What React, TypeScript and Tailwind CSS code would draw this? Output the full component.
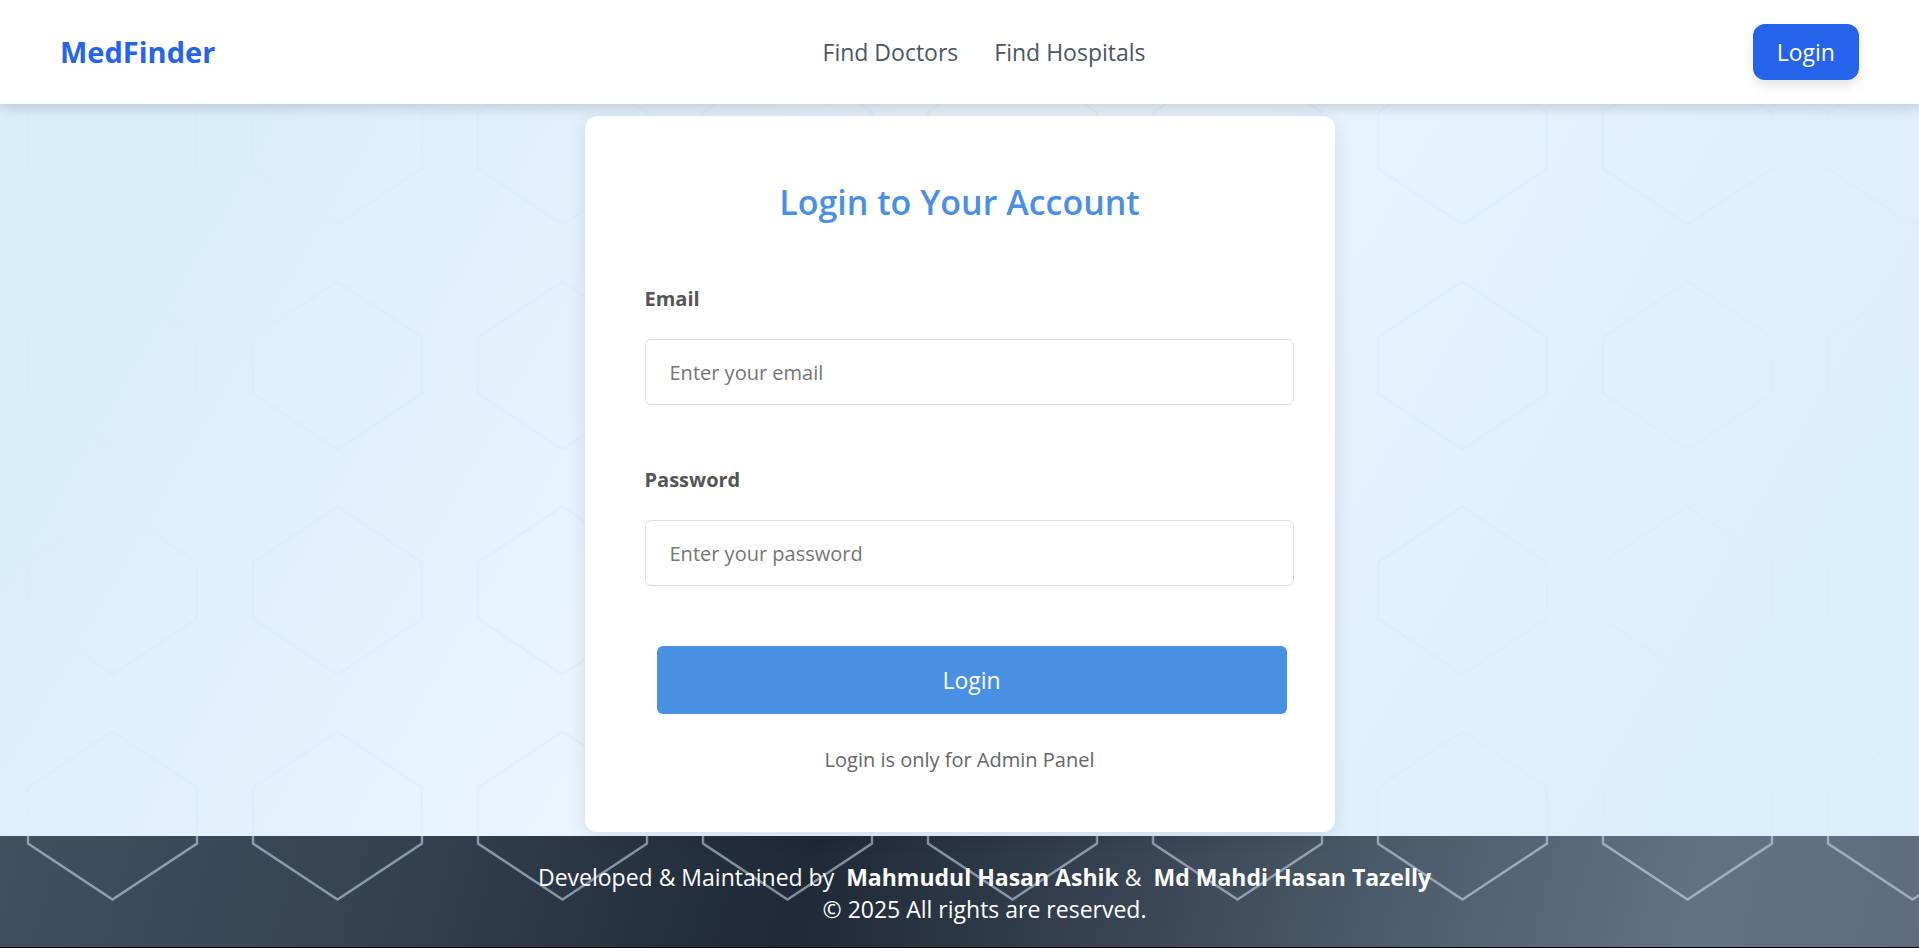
import type { ReactNode } from "react";

function HexPattern() {
  return (
    <svg className="pointer-events-none absolute inset-0 h-full w-full" aria-hidden="true">
      <defs>
        <pattern id="hex" width="225" height="225" patternUnits="userSpaceOnUse" patternTransform="translate(0 28)">
          <path
            d="M112.5 28.5 L197 84.5 V140.5 L112.5 196.5 L28 140.5 V84.5 Z"
            fill="none"
            stroke="#dbeafe"
            strokeOpacity="0.52"
            strokeWidth="2.4"
          />
        </pattern>
      </defs>
      <rect width="100%" height="100%" fill="url(#hex)" />
    </svg>
  );
}

function Header() {
  return (
    <header className="relative z-10 flex items-center justify-between bg-white px-[60px] py-6 shadow-[0_4px_12px_rgba(0,0,0,0.15)]">
      <a href="#home" className="text-[29px] leading-9 font-bold text-[#2563eb]">
        MedFinder
      </a>
      <nav className="flex gap-9 text-[23px] leading-8 text-[#4b5563]">
        <a href="#doctors">Find Doctors</a>
        <a href="#hospitals">Find Hospitals</a>
      </nav>
      <button
        type="button"
        className="rounded-xl bg-[#2563eb] px-6 py-3 text-[23px] leading-8 text-white shadow-[0_6px_12px_rgba(0,0,0,0.1)]"
      >
        Login
      </button>
    </header>
  );
}

type FieldProps = { id: string; label: ReactNode; type: string; placeholder: string };

function Field({ id, label, type, placeholder }: FieldProps) {
  return (
    <div className="flex flex-col gap-6">
      <label htmlFor={id} className="text-[20px] leading-8 font-bold text-[#555]">
        {label}
      </label>
      <input
        id={id}
        type={type}
        placeholder={placeholder}
        className="-mr-[19px] h-[66px] rounded-md border border-[#ddd] bg-white px-6 text-[20px] placeholder:text-[#757575]"
      />
    </div>
  );
}

function LoginCard() {
  return (
    <form className="relative flex w-full max-w-[750px] flex-col rounded-xl bg-white px-[60px] pt-[60px] pb-14 shadow-[0_4px_20px_rgba(0,0,0,0.1)]">
      <h1 className="text-center text-[34px] leading-[52px] font-semibold text-[#4a90e2]">Login to Your Account</h1>
      <div className="mt-[55px] flex flex-col gap-[59px]">
        <Field id="email" label="Email" type="email" placeholder="Enter your email" />
        <Field id="password" label="Password" type="password" placeholder="Enter your password" />
      </div>
      <button type="submit" className="mt-[60px] -mr-3 ml-3 h-[68px] rounded-md bg-[#4a90e2] text-[23px] text-white">
        Login
      </button>
      <p className="mt-[30px] text-center text-[20px] leading-8 text-[#666]">Login is only for Admin Panel</p>
    </form>
  );
}

function Footer() {
  return (
    <footer className="border-b border-black bg-[linear-gradient(105deg,#405060_0%,#364454_18%,#1f2937_42%,#3c4858_61%,#4d5d6d_73%,#617283_88%,#5c6d7d_100%)] pt-[25px] pb-[22px] pl-[50px] text-center text-[23px] leading-8 text-white">
      <div className="relative">
        <p>
          Developed &amp; Maintained by&nbsp; <strong>Mahmudul Hasan Ashik</strong> &amp;&nbsp;{" "}
          <strong>Md Mahdi Hasan Tazelly</strong>
        </p>
        <p>© 2025 All rights are reserved.</p>
      </div>
    </footer>
  );
}

export default function App() {
  return (
    <div className="relative flex min-h-screen flex-col bg-[linear-gradient(120deg,#daedfb_0%,#d9edfb_12%,#dfeffc_20%,#ebf5ff_44%,#e6f3fe_60%,#e0f0fd_74%,#dbeefc_88%,#dceffc_100%)] font-['Open_Sans',sans-serif]">
      <HexPattern />
      <Header />
      <main className="flex flex-1 justify-center px-6 pt-3 pb-1">
        <LoginCard />
      </main>
      <Footer />
    </div>
  );
}
